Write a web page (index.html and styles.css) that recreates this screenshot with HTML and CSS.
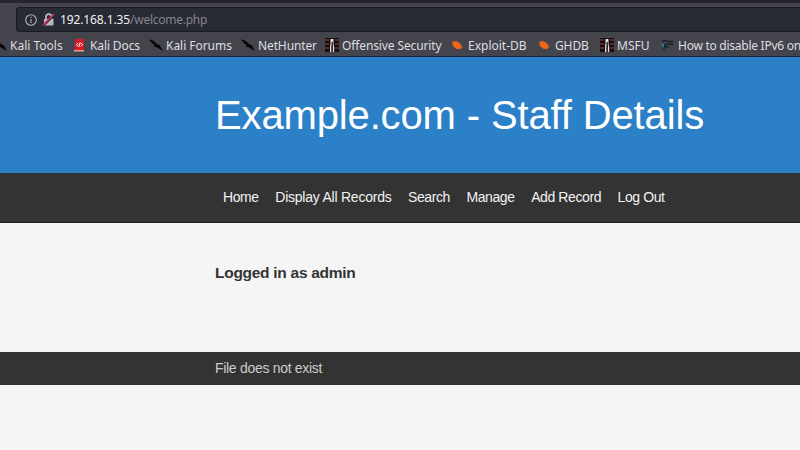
FILE: index.html
```html
<!DOCTYPE html>
<html lang="en">
<head>
<meta charset="utf-8">
<title>Staff Details</title>
<link rel="stylesheet" href="styles.css">
</head>
<body>
<svg class="defs" aria-hidden="true">
  <symbol id="dragon" viewBox="0 0 14 14"><path d="M0 1.2l4.5 1.6 4 3.7 1.8.3L14 13 8.2 9.6 4.4 8.2l1.2-1.4L2.5 4.8z" fill="#050507"/></symbol>
  <symbol id="docs" viewBox="0 0 14 14"><path d="M0 1h3v12H0z" fill="#29476f"/><path d="M2 1h9v12H1z" fill="#d51c24"/><path d="M1 12h10v1.5H1z" fill="#dfa5a0"/><path d="M5 5L3.5 6.7 5 8.4M8 5l1.5 1.7L8 8.4M7.2 4.5L5.8 9" fill="none" stroke="#fff" stroke-width="1"/></symbol>
  <symbol id="offsec" viewBox="0 0 14 14"><path d="M0 0h14v14H0z" fill="#160f12"/><path d="M0 2h4M10 2h4M0 6h4M10 6h4M0 10h4M10 10h4" stroke="#713331" stroke-width="1.3"/><path d="M5 14V8l.5-2V1h3v5l.7 3v5H8V8H6.5v6z" fill="#e8dfdb"/><path d="M6.5 4H8v9H6.5z" fill="#343036"/></symbol>
  <symbol id="bug" viewBox="0 0 12 12"><path d="M1 2.2l2 .3L5 2l2 1 2 1.2.8 1.6L11.6 8.2 10 8.8l-.6 1.6-2-.6-1.7.4L4.7 9 3 8.2 2.6 7 1 6.2l.8-1.1L.8 4l1.2-.4z" fill="#ee6716"/></symbol>
  <symbol id="wave" viewBox="0 0 14 14"><path d="M1 4l3 3v6C3 9 2 7 1 4z" fill="#258ac1"/><path d="M2 4c4-4 6 2 11-1M4 8c4-5 5 0 9-2M4 12c-1-5 2-3 5-3" fill="none" stroke="#15191e" stroke-width="1.2"/></symbol>
</svg>
<div class="browser">
  <div class="toolbar">
    <div class="address">
      <svg class="info" viewBox="0 0 12 12"><circle cx="6" cy="6" r="5.3"/><path d="M6 5v4M6 2.8v1.2"/></svg>
      <svg class="lock" viewBox="0 0 13 13"><path d="M4 6V4a2.8 2.8 0 0 1 5.6 0v2" fill="none" stroke="#b8b8bc" stroke-width="1.7"/><path d="M2 6h9.5v6.5H2z" fill="#b8b8bc"/><path d="M1.5 13L12.5 2" stroke="#292a34" stroke-width="1.4"/><path d="M.8 12.2L12 1" stroke="#e32462" stroke-width="1.6"/></svg>
      <span class="url"><b>192.168.1.35</b>/welcome.php</span>
    </div>
  </div>
  <div class="bookmarks">
    <div class="bm tools"><svg><use href="#dragon"/></svg><span>Kali Tools</span></div>
    <div class="bm docs"><svg><use href="#docs"/></svg><span>Kali Docs</span></div>
    <div class="bm forums"><svg><use href="#dragon"/></svg><span>Kali Forums</span></div>
    <div class="bm hunter"><svg><use href="#dragon"/></svg><span>NetHunter</span></div>
    <div class="bm security"><svg><use href="#offsec"/></svg><span>Offensive Security</span></div>
    <div class="bm exploit"><svg><use href="#bug"/></svg><span>Exploit-DB</span></div>
    <div class="bm ghdb"><svg><use href="#bug"/></svg><span>GHDB</span></div>
    <div class="bm msfu"><svg><use href="#offsec"/></svg><span>MSFU</span></div>
    <div class="bm ipv6"><svg><use href="#wave"/></svg><span>How to disable IPv6 on</span></div>
  </div>
</div>
<header><h1>Example.com - Staff Details</h1></header>
<nav><a>Home</a><a>Display All Records</a><a>Search</a><a>Manage</a><a>Add Record</a><a>Log Out</a></nav>
<main><h2>Logged in as admin</h2></main>
<footer>File does not exist</footer>
</body>
</html>
```
FILE: styles.css
```css
* { box-sizing: border-box; }
body { margin: 0; height: 450px; overflow: hidden; background: #f5f5f5; font-family: "Liberation Sans", Arial, sans-serif; }
.defs { display: none; }
.browser { height: 57px; background: #43444c; border-bottom: 1px solid #17233a; overflow: hidden; font-family: "Noto Sans", sans-serif; }
.toolbar { height: 34px; padding: 4px 0 0 16px; border-top: 3px solid #25262c; }
.address { height: 25px; width: 800px; display: flex; align-items: center; padding-left: 8px; background: #282a34; border: 1px solid #191b24; border-radius: 3px; }
.info { width: 12px; height: 12px; margin-right: 5px; fill: none; stroke: #b0b1b7; stroke-width: 1.1; }
.lock { width: 13px; height: 13px; margin-right: 5px; }
.url { font-size: 12px; line-height: 22px; letter-spacing: -.26px; color: #85868e; white-space: nowrap; }
.url b { font-weight: 400; letter-spacing: -.12px; color: #f2f2f4; }
.bookmarks { height: 22px; display: flex; }
.bm { display: flex; flex: none; align-items: center; height: 22px; font-size: 12px; letter-spacing: -.12px; color: #dedee0; white-space: nowrap; }
.bm svg { width: 14px; height: 14px; margin-right: 3px; flex: none; }
.tools { width: 80px; margin-left: -7px; letter-spacing: 0; }
.docs { width: 76px; }
.forums { width: 92px; letter-spacing: -.04px; }
.hunter { width: 84px; }
.security { width: 126px; }
.exploit { width: 87px; letter-spacing: 0; }
.ghdb { width: 62px; }
.msfu { width: 60px; letter-spacing: 0; }
.exploit svg, .ghdb svg { width: 12px; height: 12px; margin-right: 5px; }
.bm.ipv6 { letter-spacing: -.26px; }
.bm.ipv6 svg { margin-right: 4px; }
header { height: 116px; padding: 35px 0 0 215px; background: #2b80c8; }
h1 { margin: 0; font-size: 40px; letter-spacing: -.14px; font-weight: 400; line-height: 46px; color: #fff; white-space: nowrap; }
nav { height: 50px; display: flex; align-items: center; gap: 16.5px; padding: 0 0 1px 223px; background: #333; border-bottom: 1px solid #222; font-size: 14px; letter-spacing: -.4px; color: #f2f2f2; white-space: nowrap; }
nav a:nth-child(2) { letter-spacing: -.23px; }
main { height: 129px; padding: 40px 0 0 215px; }
h2 { margin: 0; font-size: 15.5px; letter-spacing: -.28px; line-height: 20px; color: #333; }
footer { height: 33px; padding-left: 215px; line-height: 33px; font-size: 14px; letter-spacing: -.3px; background: #333; color: #ccc; }
```
